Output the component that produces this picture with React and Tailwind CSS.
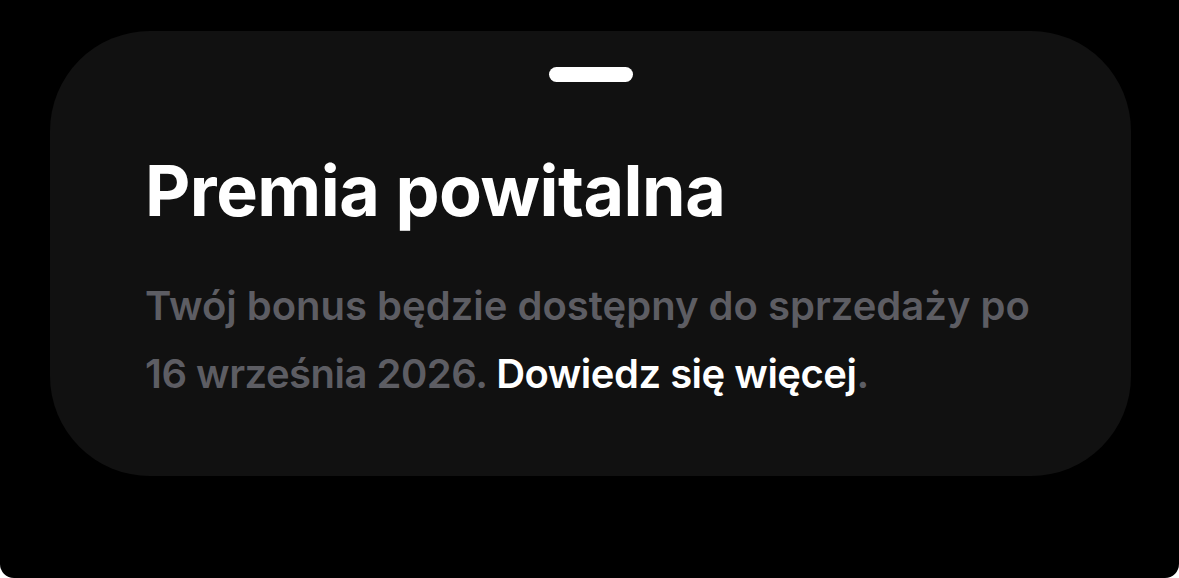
import React from "react";

export default function App() {
  return (
    <div className="w-[1179px] h-[578px] bg-white">
      <div
        className="w-full h-full bg-black rounded-b-[14px] pt-[31px] pl-[50px]"
        style={{ fontFamily: "Inter, 'Noto Sans', sans-serif" }}
      >
        {/* sheet card */}
        <div className="w-[1081px] h-[445px] bg-[#111111] rounded-[100px] pt-[36px]">
          <div className="mx-auto w-[84px] h-[15px] rounded-full bg-white" />

          <div className="pl-[95px] pr-[40px]">
            <h1 className="mt-[74px] text-[70px] leading-[70px] font-bold text-white tracking-[-0.5px]">
              Premia powitalna
            </h1>

            <p className="mt-[46px] text-[40px] leading-[68px] font-semibold text-[#5d5d63] whitespace-nowrap">
              Twój bonus będzie dostępny do sprzedaży po
              <br />
              <span className="tracking-[-0.5px]">
                16 września 2026. <span className="text-white">Dowiedz się więcej</span>.
              </span>
            </p>
          </div>
        </div>
      </div>
    </div>
  );
}
